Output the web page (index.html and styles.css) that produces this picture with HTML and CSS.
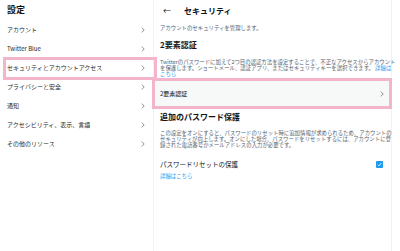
FILE: index.html
```html
<!DOCTYPE html>
<html lang="ja">
    <head>
        <meta charset="UTF-8">
        <title>セキュリティ</title>
        <link rel="stylesheet" href="styles.css">
    </head>
    <body>
        <div class="page">
            <div class="side">
                <div class="side_hd">設定</div>
                <div class="menu">
                    <div class="item">アカウント<svg class="chev" viewBox="0 0 4 6"><path d="M0.8 0.6 L3.2 3 L0.8 5.4"/></svg></div>
                    <div class="item">Twitter Blue<svg class="chev" viewBox="0 0 4 6"><path d="M0.8 0.6 L3.2 3 L0.8 5.4"/></svg></div>
                    <div class="item on">セキュリティとアカウントアクセス<svg class="chev" viewBox="0 0 4 6"><path d="M0.8 0.6 L3.2 3 L0.8 5.4"/></svg></div>
                    <div class="item">プライバシーと安全<svg class="chev" viewBox="0 0 4 6"><path d="M0.8 0.6 L3.2 3 L0.8 5.4"/></svg></div>
                    <div class="item">通知<svg class="chev" viewBox="0 0 4 6"><path d="M0.8 0.6 L3.2 3 L0.8 5.4"/></svg></div>
                    <div class="item">アクセシビリティ、表示、言語<svg class="chev" viewBox="0 0 4 6"><path d="M0.8 0.6 L3.2 3 L0.8 5.4"/></svg></div>
                    <div class="item">その他のリソース<svg class="chev" viewBox="0 0 4 6"><path d="M0.8 0.6 L3.2 3 L0.8 5.4"/></svg></div>
                </div>
            </div>
            <div class="main">
                <div class="main_hd">
                    <span class="back">←</span>
                    <span class="title">セキュリティ</span>
                </div>
                <div class="lead">アカウントのセキュリティを管理します。</div>
                <div class="h2">2要素認証</div>
                <div class="desc">Twitterのパスワードに加えて2つ目の認証方法を設定することで、不正なアクセスからアカウント<br>を保護します。ショートメール、認証アプリ、またはセキュリティキーを選択できます。 <span class="link">詳細は<br>こちら</span></div>
                <div class="row">2要素認証<svg class="chev" viewBox="0 0 4 6"><path d="M0.8 0.6 L3.2 3 L0.8 5.4"/></svg></div>
                <div class="h2 h2b">追加のパスワード保護</div>
                <div class="desc desc2">この設定をオンにすると、パスワードのリセット時に追加情報が求められるため、アカウントの<br>セキュリティが向上します。オンにした場合、パスワードをリセットするには、アカウントに登<br>録された電話番号かメールアドレスの入力が必要です。</div>
                <div class="check_row">
                    <span>パスワードリセットの保護</span>
                    <span class="box"><svg viewBox="0 0 7 7"><path d="M1.8 3.7 L3 4.9 L5.3 2"/></svg></span>
                </div>
                <div class="link more">詳細はこちら</div>
            </div>
        </div>
        <div class="mark mark1"></div>
        <div class="mark mark2"></div>
    </body>
</html>
```

FILE: styles.css
```css
body {
    margin: 0;
    background: #fff;
    color: #0f1419;
    font-family: "Noto Sans CJK JP", "Noto Sans", sans-serif;
    position: relative;
    width: 400px;
    height: 251px;
    overflow: hidden;
}
.page {
    display: flex;
    height: 251px;
}
.side {
    width: 153px;
    border-right: 1px solid #eff3f4;
}
.side_hd {
    height: 20px;
    line-height: 20px;
    padding-left: 7px;
    font-size: 9px;
    font-weight: bold;
}
.item {
    height: 19px;
    display: flex;
    align-items: center;
    justify-content: space-between;
    padding: 0 8px 0 7px;
    font-size: 6px;
    color: #26292c;
}
.chev {
    width: 4px;
    height: 6px;
    fill: none;
    stroke: #536471;
    stroke-width: 0.7;
}
.main {
    width: 237px;
    border-right: 1px solid #eff3f4;
}
.main_hd {
    height: 20px;
    display: flex;
    align-items: center;
}
.back {
    margin-left: 9px;
    font-size: 8px;
}
.title {
    margin-left: 13px;
    font-size: 8px;
    font-weight: bold;
}
.lead {
    margin-top: 5px;
    padding-left: 6px;
    font-size: 5.4px;
    line-height: 6px;
    color: #536471;
}
.h2 {
    margin-top: 9px;
    padding-left: 6px;
    font-size: 8px;
    line-height: 10px;
    font-weight: bold;
}
.desc {
    margin-top: 9px;
    padding: 0 6px;
    font-size: 5.4px;
    line-height: 6px;
    height: 18px;
    white-space: nowrap;
    color: #536471;
}
.link {
    color: #1d9bf0;
}
.row {
    margin-top: 2px;
    height: 29px;
    background: #f7f9f9;
    display: flex;
    align-items: center;
    justify-content: space-between;
    padding: 0 7px 0 6px;
    font-size: 6px;
}
.h2b {
    margin-top: 4px;
}
.desc2 {
    margin-top: 8px;
}
.check_row {
    margin-top: 10px;
    height: 12px;
    display: flex;
    align-items: center;
    justify-content: space-between;
    padding: 0 8px 0 6px;
    font-size: 6.5px;
}
.box {
    width: 7px;
    height: 7px;
    border-radius: 1px;
    background: #1d9bf0;
    display: flex;
}
.box svg {
    width: 7px;
    height: 7px;
    fill: none;
    stroke: #fff;
    stroke-width: 0.8;
}
.more {
    margin-top: 3px;
    padding-left: 6px;
    font-size: 5.4px;
    line-height: 6px;
}
.mark {
    position: absolute;
    border: 3px solid #f4b4cb;
    box-sizing: border-box;
}
.mark1 {
    left: 3px;
    top: 57px;
    width: 154px;
    height: 23px;
}
.mark2 {
    left: 152px;
    top: 78px;
    width: 240px;
    height: 31px;
}
```
